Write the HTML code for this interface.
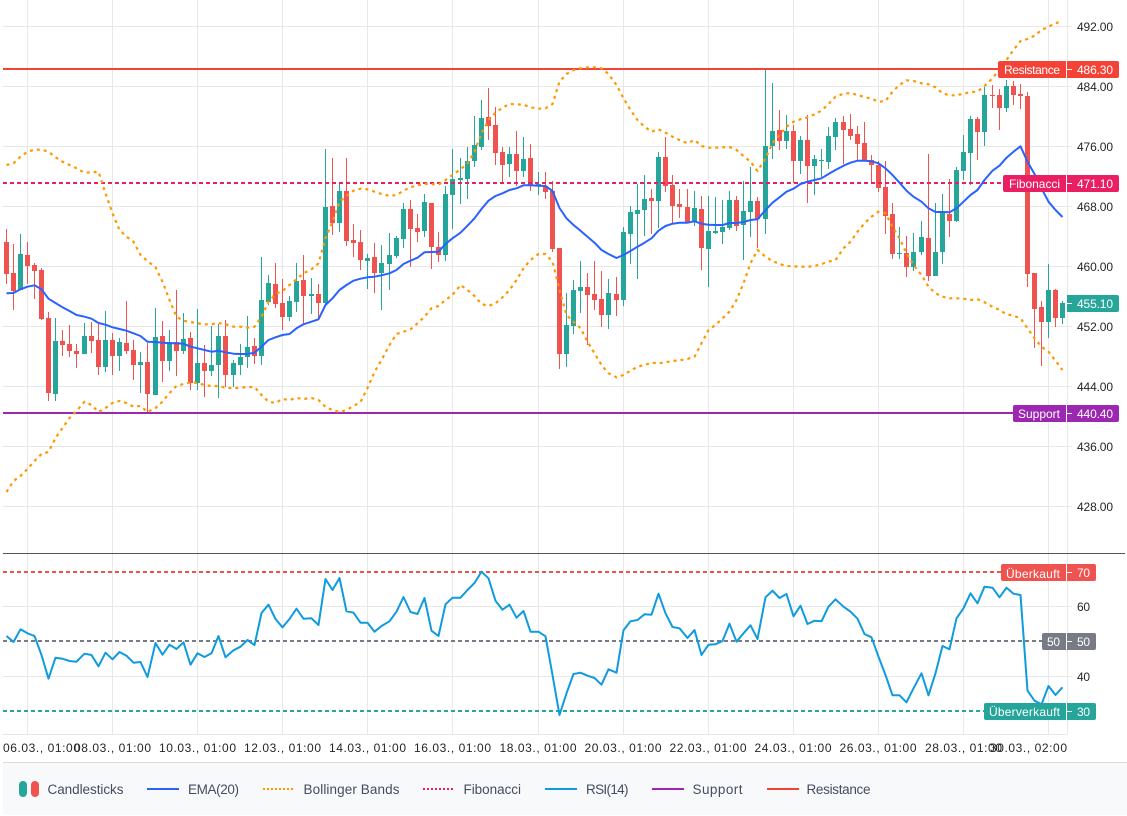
<!DOCTYPE html>
<html lang="de">
<head>
<meta charset="utf-8">
<title>Chart</title>
<style>
html,body{margin:0;padding:0;background:#fff;width:1127px;height:816px;overflow:hidden}
svg{display:block;font-family:"Liberation Sans",sans-serif}
.ax{font-size:12px;fill:#262626}
.lb{font-size:12px;fill:#fff}
.lg{font-size:13.5px;fill:#454c60}
</style>
</head>
<body>
<svg width="1127" height="816" viewBox="0 0 1127 816" xmlns="http://www.w3.org/2000/svg">
<defs><clipPath id="cp"><rect x="3" y="0" width="1064" height="553"/></clipPath><clipPath id="cr"><rect x="3" y="554" width="1064" height="180"/></clipPath></defs>
<!-- footer -->
<rect x="3" y="763" width="1124" height="52" fill="#f8f9fb"/>
<rect x="3" y="762" width="1124" height="1" fill="#dcdcdc"/>
<!-- grid -->
<g stroke="#e8e8e8" stroke-width="1" shape-rendering="crispEdges" fill="none">
<path d="M3 26.5H1072M3 86.5H1072M3 146.5H1072M3 206.5H1072M3 266.5H1072M3 326.5H1072M3 386.5H1072M3 446.5H1072M3 506.5H1072M3 606.5H1072M3 676.5H1072M3 734.5H1067"/>
<path d="M27.5 0V553M112.5 0V553M197.5 0V553M282.5 0V553M367.5 0V553M452.5 0V553M538.5 0V553M623.5 0V553M708.5 0V553M793.5 0V553M878.5 0V553M963.5 0V553M1048.5 0V553M1067.5 0V734"/>
<path d="M27.5 554V734M112.5 554V734M197.5 554V734M282.5 554V734M367.5 554V734M452.5 554V734M538.5 554V734M623.5 554V734M708.5 554V734M793.5 554V734M878.5 554V734M963.5 554V734M1048.5 554V734"/>
</g>
<rect x="3" y="553" width="1122" height="1" fill="#555"/>
<!-- candles -->
<g fill="none" shape-rendering="crispEdges" clip-path="url(#cp)">
<path stroke="#ef5350" stroke-width="1" d="M6.5 229V284M13.5 244V310M27.5 242V284M34.5 263V299M41.5 268V320M48.5 312V401M62.5 330V356M69.5 325V357M76.5 344V368M91.5 322V353M98.5 324V375M112.5 333V375M126.5 301V354M133.5 340V380M147.5 343V413M162.5 321V382M176.5 290V376M190.5 332V390M204.5 345V397M225.5 320V387M254.5 338V364M275.5 263V308M282.5 279V330M303.5 255V325M318.5 284V320M332.5 158V235M346.5 158V246M353.5 224V257M360.5 230V270M374.5 243V293M410.5 200V267M417.5 214V242M431.5 203V269M438.5 232V262M488.5 88V140M495.5 107V165M502.5 147V183M516.5 131V186M530.5 144V191M545.5 172V199M552.5 181V252M559.5 248V369M587.5 273V345M594.5 261V310M601.5 271V327M616.5 277V316M651.5 189V234M665.5 137V192M672.5 175V224M679.5 189V218M687.5 189V223M701.5 196V270M736.5 196V231M757.5 197V248M779.5 110V150M793.5 125V183M807.5 115V203M843.5 116V164M850.5 114V140M857.5 126V160M864.5 122V160M871.5 155V182M878.5 161V192M885.5 161V234M892.5 203V259M906.5 236V277M928.5 154V281M949.5 179V237M977.5 117V160M992.5 85V108M999.5 89V130M1013.5 81V105M1020.5 84V109M1027.5 92V287M1034.5 273V348M1041.5 301V366M1055.5 289V327"/>
<path stroke="#26a69a" stroke-width="1" d="M20.5 234V290M55.5 318V401M84.5 323V354M105.5 311V372M119.5 338V371M140.5 352V393M155.5 308V395M169.5 330V371M183.5 313V354M197.5 309V390M211.5 326V376M218.5 324V398M233.5 360V387M240.5 344V375M247.5 316V368M261.5 257V365M268.5 275V305M289.5 296V321M296.5 263V312M311.5 278V314M325.5 149V306M339.5 184V232M367.5 254V289M381.5 245V310M389.5 233V290M396.5 236V258M403.5 203V248M424.5 194V237M445.5 186V261M452.5 149V229M460.5 158V204M467.5 147V199M474.5 116V167M481.5 100V150M509.5 147V177M523.5 137V177M538.5 172V195M566.5 293V367M573.5 280V334M580.5 261V313M608.5 279V329M623.5 227V306M630.5 206V264M637.5 184V279M644.5 175V236M658.5 152V228M694.5 191V226M708.5 196V287M715.5 197V234M722.5 200V244M729.5 191V230M743.5 181V260M750.5 167V237M765.5 70V234M772.5 83V159M786.5 115V149M800.5 136V174M814.5 155V195M821.5 149V177M828.5 127V169M835.5 118V150M899.5 227V259M913.5 233V271M921.5 221V255M935.5 203V276M942.5 194V264M956.5 167V222M963.5 135V180M970.5 116V185M984.5 87V146M1006.5 80V112M1048.5 264V338M1062.5 301V324"/>
<path stroke="#ef5350" stroke-width="5" d="M6.5 242V274M13.5 273V291M27.5 255V266M34.5 265V271M41.5 270V319M48.5 318V393M62.5 341V345M69.5 344V351M76.5 351V354M91.5 336V341M98.5 340V367M112.5 340V356M126.5 343V351M133.5 350V365M147.5 362V394M162.5 336V361M176.5 342V351M190.5 338V383M204.5 363V371M225.5 336V375M254.5 346V356M275.5 284V304M282.5 303V317M303.5 280V296M318.5 294V303M332.5 206V223M346.5 191V241M353.5 240V243M360.5 242V260M374.5 257V273M410.5 209V229M417.5 228V232M431.5 203V247M438.5 247V255M488.5 117V126M495.5 125V153M502.5 152V165M516.5 154V171M530.5 158V186M545.5 186V192M552.5 191V249M559.5 248V354M587.5 287V295M594.5 294V300M601.5 299V315M616.5 294V300M651.5 198V201M665.5 157V186M672.5 185V206M679.5 204V207M687.5 207V222M701.5 209V248M736.5 200V226M757.5 201V219M779.5 130V141M793.5 131V161M807.5 140V166M843.5 122V130M850.5 129V136M857.5 134V144M864.5 143V161M871.5 160V165M878.5 165V188M885.5 187V216M892.5 214V254M906.5 253V267M928.5 238V276M949.5 214V221M977.5 119V132M992.5 95V96M999.5 95V108M1013.5 86V95M1020.5 94V96M1027.5 96V274M1034.5 273V309M1041.5 307V322M1055.5 290V318"/>
<path stroke="#26a69a" stroke-width="5" d="M20.5 254V290M55.5 341V394M84.5 336V354M105.5 340V367M119.5 342V356M140.5 362V365M155.5 337V395M169.5 342V361M183.5 339V351M197.5 363V383M211.5 365V371M218.5 336V365M233.5 363V375M240.5 357V365M247.5 347V357M261.5 300V356M268.5 283V302M289.5 301V317M296.5 281V302M311.5 294V296M325.5 207V303M339.5 191V223M367.5 258V261M381.5 263V273M389.5 255V264M396.5 238V256M403.5 209V239M424.5 202V231M445.5 194V255M452.5 179V195M460.5 178V180M467.5 161V179M474.5 145V161M481.5 118V147M509.5 154V164M523.5 159V171M538.5 184V186M566.5 325V354M573.5 290V326M580.5 287V291M608.5 293V315M623.5 232V300M630.5 212V234M637.5 210V214M644.5 199V210M658.5 157V201M694.5 208V222M708.5 231V249M715.5 231V233M722.5 227V232M729.5 200V228M743.5 211V225M750.5 201V212M765.5 146V219M772.5 131V146M786.5 131V141M800.5 140V161M814.5 159V166M821.5 160V161M828.5 136V162M835.5 122V137M899.5 253V254M913.5 252V267M921.5 237V252M935.5 252V276M942.5 213V252M956.5 170V221M963.5 152V171M970.5 119V153M984.5 95V132M1006.5 86V108M1048.5 290V322M1062.5 303V318"/>
</g>
<!-- price lines -->
<g clip-path="url(#cp)" fill="none">
<path d="M3 183H1003" stroke="#e91e63" stroke-width="2" stroke-dasharray="4 3"/>
<path d="M3 69H998" stroke="#f44336" stroke-width="2"/>
<path d="M3 413H1013" stroke="#9c27b0" stroke-width="2"/>
</g>
<!-- Bollinger -->
<g clip-path="url(#cp)" fill="none" stroke="#ff9800" stroke-width="2.2" stroke-dasharray="3 4" stroke-linejoin="round">
<polyline points="6.5,165 13.5,163.3 20.5,156.7 27.5,151.7 34.5,149.7 41.5,149.7 48.5,151.7 55.5,157.3 62.5,161.7 69.5,165 76.5,168.3 84.5,172.7 91.5,172.3 98.5,171.7 105.5,193.3 112.5,213.3 119.5,230 126.5,236.7 133.5,241.7 140.5,255 147.5,261 155.5,267.3 162.5,281.7 169.5,300 176.5,316.7 183.5,320.7 190.5,322 197.5,323.3 204.5,324.3 211.5,324.3 218.5,323 225.5,324.3 233.5,326.7 240.5,326.7 247.5,327.7 254.5,326.7 261.5,316.7 268.5,301.7 275.5,294 282.5,291 289.5,285 296.5,279.3 303.5,273.3 311.5,269.3 318.5,263.3 325.5,238.3 332.5,221.7 339.5,201.7 346.5,196 353.5,190.7 360.5,188.7 367.5,189.3 374.5,191.7 381.5,194 389.5,196 396.5,195 403.5,190.7 410.5,187.3 417.5,185.3 424.5,183.7 431.5,184 438.5,184.7 445.5,180 452.5,175 460.5,169.3 467.5,163.3 474.5,151.7 481.5,133.3 488.5,120 495.5,112.7 502.5,107.7 509.5,104 516.5,104.3 523.5,104.7 530.5,107.3 538.5,108.7 545.5,108.3 552.5,104 559.5,81.7 566.5,74 573.5,70 580.5,68.3 587.5,67.3 594.5,67.3 601.5,68.3 608.5,74 616.5,85 623.5,98.3 630.5,110 637.5,120 644.5,126.7 651.5,131.7 658.5,129.3 665.5,132.7 672.5,136.7 679.5,140 687.5,143.3 694.5,140 701.5,146 708.5,147.7 715.5,147.7 722.5,147.3 729.5,147 736.5,150 743.5,156 750.5,161.7 757.5,171 765.5,158.3 772.5,143.3 779.5,135 786.5,126.7 793.5,121.7 800.5,119.3 807.5,117.3 814.5,114.3 821.5,110.7 828.5,104 835.5,96.7 843.5,93.7 850.5,93 857.5,95 864.5,97 871.5,98.7 878.5,101.7 885.5,101 892.5,91.7 899.5,85 906.5,80.3 913.5,81 921.5,83.3 928.5,84.3 935.5,87.3 942.5,93.3 949.5,95.3 956.5,95.3 963.5,93.7 970.5,92 977.5,91.7 984.5,86 992.5,78.3 999.5,69.3 1006.5,60 1013.5,50 1020.5,41 1027.5,39 1034.5,35.7 1041.5,30 1048.5,26.7 1055.5,23.3 1062.5,21"/>
<polyline points="6.5,492 13.5,481 20.5,476 27.5,469 34.5,461 41.5,454 48.5,452 55.5,438 62.5,428 69.5,418 76.5,411 84.5,401.7 91.5,405 98.5,412 105.5,408 112.5,403 119.5,401 126.5,403 133.5,406.7 140.5,406 147.5,412 155.5,408 162.5,401.7 169.5,393 176.5,386 183.5,384 190.5,382.3 197.5,383 204.5,385 211.5,386 218.5,386 225.5,387.7 233.5,388.3 240.5,387.7 247.5,387 254.5,387 261.5,395 268.5,401.7 275.5,403 282.5,399 289.5,400 296.5,398 303.5,399 311.5,398 318.5,400 325.5,407 332.5,410 339.5,412 346.5,410 353.5,406 360.5,402 367.5,388 374.5,372 381.5,360 389.5,345 396.5,334 403.5,331.7 410.5,329.3 417.5,323.3 424.5,316.7 431.5,308.3 438.5,306 445.5,300 452.5,295 460.5,285 467.5,290 474.5,296 481.5,304 488.5,306 495.5,303.3 502.5,297.3 509.5,290 516.5,280 523.5,268.3 530.5,260 538.5,254 545.5,254 552.5,261.7 559.5,290 566.5,315 573.5,321.7 580.5,328 587.5,341.7 594.5,353.3 601.5,365 608.5,373.3 616.5,377.3 623.5,375 630.5,370.7 637.5,366.7 644.5,365 651.5,362.7 658.5,363.3 665.5,362.3 672.5,361 679.5,360.3 687.5,359 694.5,356.7 701.5,343.3 708.5,330 715.5,325 722.5,318.3 729.5,311.7 736.5,300 743.5,283.3 750.5,263.3 757.5,250 765.5,256.7 772.5,261 779.5,264 786.5,266 793.5,266.3 800.5,266.7 807.5,266.7 814.5,266 821.5,264 828.5,261.7 835.5,260 843.5,248.3 850.5,241.7 857.5,231.7 864.5,223.3 871.5,216.7 878.5,211.7 885.5,213.3 892.5,226.7 899.5,238.3 906.5,253.3 913.5,265 921.5,275 928.5,286.7 935.5,293.3 942.5,296.7 949.5,298.3 956.5,298.3 963.5,298.7 970.5,300 977.5,299.3 984.5,302.3 992.5,306.7 999.5,310 1006.5,314.3 1013.5,315.7 1020.5,318.3 1027.5,328.3 1034.5,338.3 1041.5,346.7 1048.5,351.7 1055.5,360.7 1062.5,370"/>
</g>
<!-- EMA -->
<polyline clip-path="url(#cp)" fill="none" stroke="#2962ff" stroke-width="2" stroke-linejoin="round" points="6.5,293.3 13.5,293 20.5,289.3 27.5,286.7 34.5,285.3 41.5,289.3 48.5,298.7 55.5,303 62.5,307.3 69.5,311 76.5,315 84.5,316.7 91.5,318.7 98.5,323 105.5,324.7 112.5,327.3 119.5,329 126.5,330.7 133.5,333.3 140.5,336 147.5,341.7 155.5,342 162.5,342.7 169.5,343.3 176.5,343.3 183.5,343.7 190.5,346.7 197.5,348.3 204.5,350 211.5,351.7 218.5,350.7 225.5,352.3 233.5,353.7 240.5,354 247.5,354 254.5,352.7 261.5,346.7 268.5,340 275.5,337.3 282.5,335 289.5,334 296.5,328.3 303.5,324.3 311.5,321.7 318.5,319.3 325.5,305 332.5,298.3 339.5,290 346.5,285 353.5,280.7 360.5,278.7 367.5,277.3 374.5,276.7 381.5,275.3 389.5,273.3 396.5,270 403.5,264 410.5,260.7 417.5,257.7 424.5,252.3 431.5,252 438.5,251.7 445.5,244 452.5,238.3 460.5,232.7 467.5,225.7 474.5,218.3 481.5,209 488.5,200.7 495.5,196 502.5,193.3 509.5,190 516.5,188.3 523.5,185.3 530.5,185.3 538.5,185.7 545.5,186 552.5,191 559.5,208 566.5,218.3 573.5,225 580.5,230.7 587.5,236.7 594.5,242.7 601.5,250 608.5,254 616.5,258 623.5,255 630.5,251 637.5,246.7 644.5,242.7 651.5,238.3 658.5,230.7 665.5,226 672.5,223.7 679.5,222.7 687.5,222.7 694.5,221.3 701.5,223.7 708.5,224.7 715.5,225 722.5,225 729.5,223 736.5,223 743.5,222 750.5,220 757.5,219.3 765.5,210 772.5,202.7 779.5,197.3 786.5,191.7 793.5,188.7 800.5,184 807.5,181.7 814.5,180 821.5,178.3 828.5,174 835.5,170 843.5,165.7 850.5,162.7 857.5,160.7 864.5,160.7 871.5,161.3 878.5,163.3 885.5,168.3 892.5,175 899.5,182.7 906.5,190.7 913.5,196.7 921.5,201.7 928.5,208.3 935.5,212 942.5,212 949.5,212.3 956.5,208.3 963.5,201.7 970.5,195 977.5,190 984.5,180 992.5,170.7 999.5,165.7 1006.5,157.7 1013.5,151.7 1020.5,146.3 1027.5,161.7 1034.5,174 1041.5,188.3 1048.5,201.7 1055.5,210 1062.5,217"/>
<!-- RSI pane -->
<g clip-path="url(#cr)" fill="none">
<path d="M3 572H1001" stroke="#ef5350" stroke-width="2" stroke-dasharray="4 3"/>
<path d="M3 641H1042" stroke="#787b86" stroke-width="2" stroke-dasharray="4 3"/>
<path d="M3 711H984" stroke="#26a69a" stroke-width="2" stroke-dasharray="4 3"/>
<polyline stroke="#0f9bde" stroke-width="2" stroke-linejoin="round" points="6.5,636 13.5,642 20.5,629.3 27.5,633.3 34.5,636 41.5,655 48.5,678.7 55.5,657.7 62.5,658.7 69.5,661 76.5,661.7 84.5,653.7 91.5,655 98.5,666.3 105.5,652.7 112.5,659.3 119.5,652 126.5,655.7 133.5,662.7 140.5,662 147.5,677 155.5,643 162.5,654.7 169.5,644.7 176.5,649 183.5,642.3 190.5,664.7 197.5,653.3 204.5,657 211.5,653.3 218.5,636 225.5,657.3 233.5,650.3 240.5,646.7 247.5,640 254.5,645 261.5,613 268.5,604.7 275.5,619 282.5,627.3 289.5,619 296.5,608.7 303.5,618.7 311.5,618.3 318.5,625 325.5,579 332.5,590 339.5,578 346.5,611.3 353.5,612.7 360.5,622.7 367.5,622.7 374.5,631.7 381.5,626 389.5,621.3 396.5,611.7 403.5,597 410.5,612 417.5,614 424.5,598 431.5,630.7 438.5,636 445.5,604.3 452.5,597.7 460.5,597.7 467.5,590 474.5,583 481.5,571.7 488.5,578.3 495.5,600.7 502.5,609.7 509.5,604.7 516.5,617.7 523.5,611 530.5,631.7 538.5,631.7 545.5,636.3 552.5,675 559.5,715 566.5,693.3 573.5,674 580.5,672.7 587.5,675.7 594.5,678 601.5,684.7 608.5,669.3 616.5,672.7 623.5,630.3 630.5,621.3 637.5,620 644.5,614.3 651.5,614.7 658.5,593.7 665.5,613.3 672.5,627 679.5,628.3 687.5,638 694.5,630 701.5,655 708.5,644.7 715.5,644.3 722.5,641 729.5,623.7 736.5,641.7 743.5,633.3 750.5,625.3 757.5,639 765.5,597.3 772.5,590.7 779.5,598 786.5,594 793.5,616.3 800.5,605.7 807.5,624 814.5,620.7 821.5,621.3 828.5,606.7 835.5,599.3 843.5,606.7 850.5,611.7 857.5,618.7 864.5,634 871.5,637.3 878.5,656.7 885.5,675 892.5,695.3 899.5,695.3 906.5,702.3 913.5,688.3 921.5,673.3 928.5,695.3 935.5,673.3 942.5,646 949.5,649.3 956.5,618.3 963.5,608.3 970.5,593.3 977.5,603.3 984.5,586.7 992.5,587.7 999.5,597.3 1006.5,587.7 1013.5,593.7 1020.5,595 1027.5,690.7 1034.5,700.7 1041.5,704.3 1048.5,686 1055.5,695 1062.5,687.3"/>
</g>
<!-- price axis text -->
<g>
<text class="ax" x="1077" y="31" textLength="36">492.00</text>
<text class="ax" x="1077" y="91" textLength="36">484.00</text>
<text class="ax" x="1077" y="151" textLength="36">476.00</text>
<text class="ax" x="1077" y="211" textLength="36">468.00</text>
<text class="ax" x="1077" y="271" textLength="36">460.00</text>
<text class="ax" x="1077" y="331" textLength="36">452.00</text>
<text class="ax" x="1077" y="391" textLength="36">444.00</text>
<text class="ax" x="1077" y="451" textLength="36">436.00</text>
<text class="ax" x="1077" y="511" textLength="36">428.00</text>
<text class="ax" x="1077" y="611" textLength="13">60</text>
<text class="ax" x="1077" y="681" textLength="13">40</text>
</g>
<!-- labels -->
<path fill="#f44336" d="M1000 61H1066V78H1000a2 2 0 0 1-2-2V63a2 2 0 0 1 2-2z"/>
<path fill="#f44336" d="M1067 61H1117a2 2 0 0 1 2 2V76a2 2 0 0 1-2 2H1067z"/>
<path fill="#e91e63" d="M1005 175H1066V192H1005a2 2 0 0 1-2-2V177a2 2 0 0 1 2-2z"/>
<path fill="#e91e63" d="M1067 175H1117a2 2 0 0 1 2 2V190a2 2 0 0 1-2 2H1067z"/>
<path fill="#9c27b0" d="M1015 405H1066V422H1015a2 2 0 0 1-2-2V407a2 2 0 0 1 2-2z"/>
<path fill="#9c27b0" d="M1067 405H1117a2 2 0 0 1 2 2V420a2 2 0 0 1-2 2H1067z"/>
<path fill="#26a69a" d="M1067 295H1117a2 2 0 0 1 2 2V310a2 2 0 0 1-2 2H1067z"/>
<path fill="#ef5350" d="M1003 564H1066V581H1003a2 2 0 0 1-2-2V566a2 2 0 0 1 2-2z"/>
<path fill="#ef5350" d="M1067 564H1094a2 2 0 0 1 2 2V579a2 2 0 0 1-2 2H1067z"/>
<path fill="#787b86" d="M1044 633H1066V650H1044a2 2 0 0 1-2-2V635a2 2 0 0 1 2-2z"/>
<path fill="#787b86" d="M1067 633H1094a2 2 0 0 1 2 2V648a2 2 0 0 1-2 2H1067z"/>
<path fill="#26a69a" d="M986 703H1066V720H986a2 2 0 0 1-2-2V705a2 2 0 0 1 2-2z"/>
<path fill="#26a69a" d="M1067 703H1094a2 2 0 0 1 2 2V718a2 2 0 0 1-2 2H1067z"/>
<path stroke="#fff" stroke-width="1" shape-rendering="crispEdges" fill="none" d="M1067 69.5h5M1067 183.5h5M1067 413.5h5M1067 303.5h5M1067 572.5h5M1067 641.5h5M1067 711.5h5"/>
<text class="lb" x="1004" y="74" textLength="56">Resistance</text>
<text class="lb" x="1077" y="74" textLength="36">486.30</text>
<text class="lb" x="1009" y="188" textLength="51">Fibonacci</text>
<text class="lb" x="1077" y="188" textLength="36">471.10</text>
<text class="lb" x="1018" y="418" textLength="42">Support</text>
<text class="lb" x="1077" y="418" textLength="36">440.40</text>
<text class="lb" x="1077" y="308" textLength="36">455.10</text>
<text class="lb" x="1006" y="578" textLength="54">Überkauft</text>
<text class="lb" x="1077" y="577" textLength="13">70</text>
<text class="lb" x="1047" y="646" textLength="13">50</text>
<text class="lb" x="1077" y="646" textLength="13">50</text>
<text class="lb" x="989" y="716" textLength="71">Überverkauft</text>
<text class="lb" x="1077" y="716" textLength="13">30</text>
<!-- time axis -->
<text class="ax" x="3" y="752" textLength="77">06.03., 01:00</text>
<text class="ax" x="74" y="752" textLength="77">08.03., 01:00</text>
<text class="ax" x="159" y="752" textLength="77">10.03., 01:00</text>
<text class="ax" x="244" y="752" textLength="77">12.03., 01:00</text>
<text class="ax" x="329" y="752" textLength="77">14.03., 01:00</text>
<text class="ax" x="414" y="752" textLength="77">16.03., 01:00</text>
<text class="ax" x="499.5" y="752" textLength="77">18.03., 01:00</text>
<text class="ax" x="584.5" y="752" textLength="77">20.03., 01:00</text>
<text class="ax" x="669.5" y="752" textLength="77">22.03., 01:00</text>
<text class="ax" x="754.5" y="752" textLength="77">24.03., 01:00</text>
<text class="ax" x="839.5" y="752" textLength="77">26.03., 01:00</text>
<text class="ax" x="925" y="752" textLength="77">28.03., 01:00</text>
<text class="ax" x="990" y="752" textLength="77">30.03., 02:00</text>
<!-- legend -->
<rect x="19" y="781" width="8" height="16" rx="4" fill="#26a69a"/>
<rect x="31" y="781" width="8" height="16" rx="4" fill="#ef5350"/>
<text class="lg" x="47.5" y="794" textLength="76">Candlesticks</text>
<rect x="147" y="788" width="32" height="2" fill="#2962ff"/>
<text class="lg" x="188" y="794" textLength="51">EMA(20)</text>
<path d="M263 789H295" stroke="#ff9800" stroke-width="2" stroke-dasharray="2 2" fill="none"/>
<text class="lg" x="303.5" y="794" textLength="96">Bollinger Bands</text>
<path d="M423 789H455" stroke="#e91e63" stroke-width="2" stroke-dasharray="2 2" fill="none"/>
<text class="lg" x="463.5" y="794" textLength="57.5">Fibonacci</text>
<rect x="545" y="788" width="32" height="2" fill="#0f9bde"/>
<text class="lg" x="586" y="794" textLength="42.5">RSI(14)</text>
<rect x="652" y="788" width="32" height="2" fill="#9c27b0"/>
<text class="lg" x="692.5" y="794" textLength="50">Support</text>
<rect x="767" y="788" width="32" height="2" fill="#f44336"/>
<text class="lg" x="806.5" y="794" textLength="64">Resistance</text>
</svg>
</body>
</html>
